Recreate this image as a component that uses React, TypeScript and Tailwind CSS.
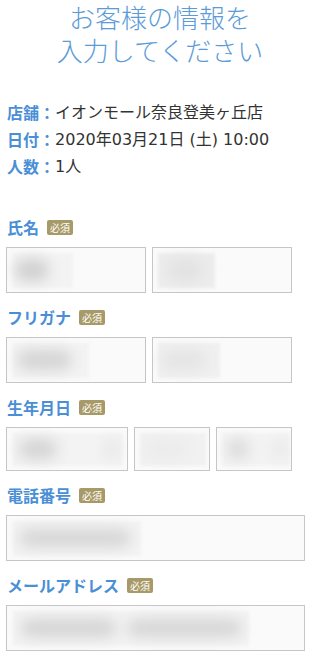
import React from "react";

type Blob = { l: number; w: number; c: string; h?: number };
type FieldBox = { w: number; h: number; rect: [number, number]; blobs: Blob[]; rectColor?: string };

function InputBox({ f }: { f: FieldBox }) {
  return (
    <div
      className="relative shrink-0 border border-[#c6c6c6] bg-[#fafafa] overflow-hidden"
      style={{ width: f.w, height: f.h }}
    >
      <div
        className="absolute top-[5px] bottom-[4px] blur-[1.5px]"
        style={{ left: f.rect[0], width: f.rect[1], backgroundColor: f.rectColor ?? "#f3f3f3" }}
      />
      {f.blobs.map((b, i) => (
        <div
          key={i}
          className="absolute top-1/2 -translate-y-1/2 rounded-full blur-[7px]"
          style={{ left: b.l, width: b.w, height: b.h ?? 16, backgroundColor: b.c }}
        />
      ))}
    </div>
  );
}

function Label({ text }: { text: string }) {
  return (
    <div className="flex items-center h-[24px] mb-[8px] pl-[1px]">
      <span className="text-[16px] leading-[24px] font-bold text-[#4a8fd6]">{text}</span>
      <span className="ml-[8px] inline-flex items-center justify-center h-[15px] px-[3px] rounded-[2px] bg-[#a89a68] text-white text-[10px] leading-[15px]">
        必須
      </span>
    </div>
  );
}

function InfoRow({ label, value }: { label: string; value: string }) {
  const font = { fontFamily: '"Noto Sans CJK JP", "Noto Sans", sans-serif' };
  const infoFont = { fontFamily: '"DejaVu Sans", "Noto Sans CJK JP", sans-serif' };
  return (
    <div className="flex items-center h-[27px] whitespace-nowrap">
      <span className="font-bold text-[#4a8fd6] leading-[27px]" style={font}>
        {label}
      </span>
      <span className="leading-[27px]" style={infoFont}>
        {value}
      </span>
    </div>
  );
}

export default function App() {
  const font = { fontFamily: '"Noto Sans CJK JP", "Noto Sans", sans-serif' };
  return (
    <div className="w-[320px] min-h-[654px] bg-white text-[#333]" style={font}>
      <div className="text-center text-[26px] leading-[33px] font-light text-[#5b9bd8]">
        <div>お客様の情報を</div>
        <div>入力してください</div>
      </div>

      <div className="mt-[33px] pl-[7px] text-[16px]">
        <InfoRow label="店舗：" value="イオンモール奈良登美ヶ丘店" />
        <InfoRow label="日付：" value="2020年03月21日 (土) 10:00" />
        <InfoRow label="人数：" value="1人" />
      </div>

      <div className="mt-[35px] pl-[6px]">
        <div className="mb-[12px]">
          <Label text="氏名" />
          <div className="flex gap-[6px]">
            <InputBox f={{ w: 140, h: 46, rect: [6, 60], blobs: [{ l: 8, w: 34, c: "#d0d0d0", h: 22 }] }} />
            <InputBox f={{ w: 140, h: 46, rect: [5, 57], rectColor: "#ededed", blobs: [{ l: 14, w: 36, c: "#e2e2e2", h: 24 }] }} />
          </div>
        </div>

        <div className="mb-[12px]">
          <Label text="フリガナ" />
          <div className="flex gap-[6px]">
            <InputBox f={{ w: 140, h: 46, rect: [6, 76], blobs: [{ l: 10, w: 55, c: "#d4d4d4", h: 20 }] }} />
            <InputBox f={{ w: 140, h: 46, rect: [5, 62], rectColor: "#f0f0f0", blobs: [{ l: 8, w: 45, c: "#e4e4e4", h: 20 }] }} />
          </div>
        </div>

        <div className="mb-[12px]">
          <Label text="生年月日" />
          <div className="flex gap-[6px]">
            <InputBox
              f={{
                w: 122,
                h: 44,
                rect: [6, 110],
                blobs: [
                  { l: 12, w: 38, c: "#d4d4d4", h: 20 },
                  { l: 100, w: 10, c: "#e0e0e0", h: 16 },
                ],
              }}
            />
            <InputBox f={{ w: 76, h: 44, rect: [5, 66], rectColor: "#f1f1f1", blobs: [{ l: 12, w: 40, c: "#ebebeb", h: 18 }] }} />
            <InputBox
              f={{
                w: 76,
                h: 44,
                rect: [5, 68],
                blobs: [
                  { l: 10, w: 22, c: "#dadada", h: 20 },
                  { l: 58, w: 10, c: "#e2e2e2", h: 16 },
                ],
              }}
            />
          </div>
        </div>

        <div className="mb-[12px]">
          <Label text="電話番号" />
          <InputBox f={{ w: 299, h: 46, rect: [6, 128], blobs: [{ l: 12, w: 112, c: "#d6d6d6", h: 18 }] }} />
        </div>

        <div>
          <Label text="メールアドレス" />
          <InputBox
            f={{
              w: 299,
              h: 46,
              rect: [6, 236],
              blobs: [
                { l: 14, w: 95, c: "#d4d4d4", h: 18 },
                { l: 120, w: 115, c: "#d6d6d6", h: 18 },
              ],
            }}
          />
        </div>
      </div>
    </div>
  );
}
